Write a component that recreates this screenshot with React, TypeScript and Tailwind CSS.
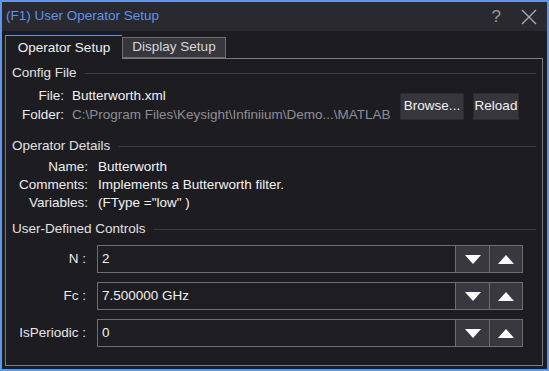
import React from "react";

const font = { fontFamily: '"Liberation Sans", Arial, sans-serif' };

function SectionHeading({ title }: { title: string }) {
  return (
    <div className="flex items-center gap-2 h-[17px]">
      <span className="text-[13.5px] text-[#e2e2e2] whitespace-nowrap">{title}</span>
      <div className="flex-1 h-px bg-[#3c3c42]" />
    </div>
  );
}

function Triangle({ up }: { up?: boolean }) {
  return (
    <svg width="16" height="9" viewBox="0 0 16 9">
      <polygon points={up ? "8,0 16,9 0,9" : "0,0 16,0 8,9"} fill="#ffffff" />
    </svg>
  );
}

function ControlRow({ label, value }: { label: string; value: string }) {
  return (
    <div className="flex items-center h-[28px]">
      <div className="w-[74px] text-right text-[13.5px] text-[#e8e8e8] whitespace-nowrap">{label}</div>
      <div className="ml-[11px] flex-1 h-full flex items-center border border-[#6e6e6e] bg-[#1e1e22] pl-[4px] text-[13.5px] text-[#f0f0f0]">
        {value}
      </div>
      <button className="w-[34px] h-full flex items-center justify-center border-y border-r border-[#6e6e6e] bg-[#38383e]">
        <Triangle />
      </button>
      <button className="w-[33px] h-full flex items-center justify-center border-y border-r border-[#6e6e6e] bg-[#38383e] mr-[13px]">
        <Triangle up />
      </button>
    </div>
  );
}

export default function App() {
  return (
    <div style={font} className="w-[549px] h-[371px] border-2 border-[#5f96ee] bg-[#1d1d21] flex flex-col overflow-hidden">
      {/* Title bar */}
      <div className="h-[29px] bg-[#29292f] flex items-center pl-[4px] pr-[8px] shrink-0">
        <span className="text-[13.5px] text-[#5f93ee]">(F1) User Operator Setup</span>
        <span className="ml-auto text-[17px] text-[#9a9aa0] leading-none mr-[20px]">?</span>
        <svg width="16" height="16" viewBox="0 0 16 16" className="mr-[2px]">
          <path d="M1 1 L15 15 M15 1 L1 15" stroke="#a8a8ae" strokeWidth="1.4" />
        </svg>
      </div>

      {/* Body */}
      <div className="flex-1 flex flex-col pt-[3px] pl-[3px] pr-[2px] pb-[2px]">
        {/* Tabs */}
        <div className="flex items-end h-[24px] shrink-0">
          <div className="w-[117px] h-[24px] border-t border-t-[#5f96ee] border-l border-[#7a7a7a] bg-[#1d1d21] flex items-center justify-center text-[13.5px] text-[#f0f0f0] relative -mb-px z-10 pt-[1px]">
            Operator Setup
          </div>
          <div className="w-[104px] h-[21px] border border-[#6e6e6e] bg-[#36363c] flex items-center justify-center text-[13.5px] text-[#d8d8d8]">
            Display Setup
          </div>
        </div>

        {/* Panel */}
        <div className="flex-1 border border-[#7a7a7a] mr-[2px] mb-[1px] pt-[6px] pl-[6px] pr-[6px] flex flex-col">
          <SectionHeading title="Config File" />
          <div className="flex items-center mt-[5px]">
            <div className="flex flex-col">
              <div className="flex items-center h-[19px] text-[13.5px]">
                <span className="w-[52px] text-right text-[#ececec]">File:</span>
                <span className="ml-[8px] text-[#f2f2f2]">Butterworth.xml</span>
              </div>
              <div className="flex items-center h-[19px] text-[13.5px]">
                <span className="w-[52px] text-right text-[#ececec]">Folder:</span>
                <span className="ml-[8px] text-[#8e8e94] whitespace-nowrap">
                  C:\Program Files\Keysight\Infiniium\Demo...\MATLAB
                </span>
              </div>
            </div>
            <div className="ml-auto mr-[17px] flex gap-[9px]">
              <button className="w-[64px] h-[27px] bg-[#36363c] border border-[#2c2c30] text-[13.5px] text-[#f2f2f2] rounded-[1px]">
                Browse...
              </button>
              <button className="w-[46px] h-[27px] bg-[#36363c] border border-[#2c2c30] text-[13.5px] text-[#f2f2f2] rounded-[1px]">
                Reload
              </button>
            </div>
          </div>

          <div className="mt-[13px]">
            <SectionHeading title="Operator Details" />
          </div>
          <div className="flex flex-col mt-[3px] text-[13.5px]">
            <div className="flex items-center h-[18px]">
              <span className="w-[76px] text-right text-[#ececec]">Name:</span>
              <span className="ml-[10px] text-[#f2f2f2]">Butterworth</span>
            </div>
            <div className="flex items-center h-[18px]">
              <span className="w-[76px] text-right text-[#ececec]">Comments:</span>
              <span className="ml-[10px] text-[#f2f2f2]">Implements a Butterworth filter.</span>
            </div>
            <div className="flex items-center h-[18px]">
              <span className="w-[76px] text-right text-[#ececec]">Variables:</span>
              <span className="ml-[10px] text-[#f2f2f2]">(FType ="low" )</span>
            </div>
          </div>

          <div className="mt-[9px]">
            <SectionHeading title="User-Defined Controls" />
          </div>
          <div className="flex flex-col gap-[9px] mt-[7px]">
            <ControlRow label="N :" value="2" />
            <ControlRow label="Fc :" value="7.500000 GHz" />
            <ControlRow label="IsPeriodic :" value="0" />
          </div>
        </div>
      </div>
    </div>
  );
}
